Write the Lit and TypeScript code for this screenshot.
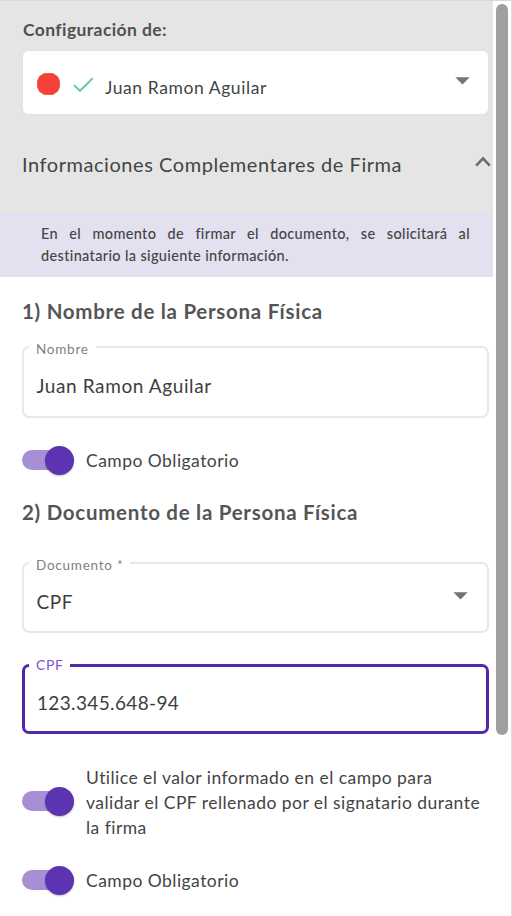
import { LitElement, html, css } from "lit";
import { customElement, property } from "lit/decorators.js";

const caret = html`<svg class="caret" width="15" height="8" viewBox="0 0 15 8">
  <path d="M0.3 0.3H14.7L7.5 7.6Z" fill="#757575" />
</svg>`;

@customElement("outlined-field")
class OutlinedField extends LitElement {
  @property() label = "";
  @property() value = "";
  @property({ type: Boolean }) select = false;
  @property({ type: Boolean, reflect: true }) focused = false;

  static styles = css`
    :host {
      display: block;
      box-sizing: border-box;
      position: relative;
      height: 72px;
      border: 2px solid #e8e8e8;
      border-radius: 7px;
    }
    :host([focused]) {
      border: 3px solid #5428ae;
      height: 70px;
    }
    .label {
      position: absolute;
      top: -8px;
      left: 5px;
      padding: 0 7px;
      background: #fff;
      color: #808080;
      font-size: 13.5px;
      line-height: 18px;
      letter-spacing: 0.75px;
      white-space: nowrap;
    }
    :host([focused]) .label {
      top: -11px;
      left: 4px;
      color: #7d55c7;
      font-size: 14px;
      letter-spacing: 0.6px;
    }
    .body {
      display: flex;
      align-items: center;
      justify-content: space-between;
      height: 100%;
      box-sizing: border-box;
      padding: 7px 19px 0 12.5px;
      font-size: 19px;
      letter-spacing: 0.6px;
      color: #3e3e3e;
    }
    :host([focused]) .body {
      padding-left: 12px;
      letter-spacing: 0.35px;
    }
    .caret {
      margin-bottom: 10px;
    }
  `;

  render() {
    return html`<span class="label">${this.label}</span>
      <div class="body"><span>${this.value}</span>${this.select ? caret : ""}</div>`;
  }
}

@customElement("toggle-row")
class ToggleRow extends LitElement {
  @property() label = "";

  static styles = css`
    :host {
      display: flex;
      align-items: center;
      gap: 12px;
      min-height: 30px;
    }
    .switch {
      flex: none;
      display: flex;
      align-items: center;
      justify-content: flex-end;
      width: 52px;
      height: 20px;
      border-radius: 10px;
      background: #a78fd5;
    }
    :host([multiline]) .switch {
      margin-bottom: 3px;
    }
    .thumb {
      width: 29px;
      height: 29px;
      border-radius: 50%;
      background: #5c33b0;
      box-shadow: 0 1px 2px rgba(0, 0, 0, 0.25);
    }
    .text {
      font-size: 17.5px;
      line-height: 25px;
      letter-spacing: 0.46px;
      color: #444;
      white-space: pre-line;
    }
  `;

  render() {
    return html`<span class="switch"><span class="thumb"></span></span>
      <span class="text">${this.label}</span>`;
  }
}

@customElement("app-root")
class AppRoot extends LitElement {
  static styles = css`
    :host {
      display: flex;
      box-sizing: border-box;
      width: 512px;
      height: 916px;
      overflow: hidden;
      background: #fff;
      border-top: 1px solid #d9d9d9;
      border-right: 1px solid #dedede;
      font-family: Lato, "Liberation Sans", sans-serif;
      color: #444;
    }
    .panel {
      width: 493px;
      flex: none;
    }
    .head {
      box-sizing: border-box;
      height: 211px;
      padding: 17px 0 0 23px;
      background: #e5e5e5;
    }
    .caption {
      font-size: 17.5px;
      font-weight: 700;
      line-height: 24px;
      letter-spacing: 0.4px;
      color: #505050;
    }
    .signer {
      display: flex;
      align-items: center;
      box-sizing: border-box;
      width: 465px;
      height: 63px;
      margin-top: 9px;
      padding: 4px 18px 0 14px;
      border-radius: 5px;
      background: #fff;
      box-shadow: 0 0 1px rgba(0, 0, 0, 0.12);
    }
    .dot {
      margin: 0 13px 1px 0;
    }
    .check {
      margin-right: 11px;
    }
    .name {
      flex: 1;
      padding-top: 5px;
      font-size: 17.5px;
      letter-spacing: 0.58px;
    }
    .caret {
      margin-bottom: 7px;
    }
    .section {
      display: flex;
      align-items: center;
      justify-content: space-between;
      height: 40px;
      margin-top: 30px;
      padding-right: 2px;
      font-size: 20px;
      letter-spacing: 0.55px;
    }
    .section span {
      margin-left: -1px;
    }
    .chevron {
      margin-bottom: 6px;
    }
    .notice {
      box-sizing: border-box;
      height: 65px;
      padding: 11px 23px 0 41px;
      background: #e3e0ef;
      font-size: 14.5px;
      line-height: 22px;
      letter-spacing: 0.35px;
      font-weight: 500;
      text-align: justify;
    }
    .form {
      display: flex;
      flex-direction: column;
      width: 467px;
      padding: 19px 0 0 22px;
    }
    .title {
      font-size: 20.5px;
      font-weight: 700;
      line-height: 30px;
      letter-spacing: 0.72px;
      color: #555;
    }
    .f1 {
      margin-top: 20px;
    }
    .t1 {
      margin: 27px 0 22px;
    }
    .f2 {
      height: 71px;
      margin-top: 35px;
    }
    .f3 {
      margin: 31px 0 31px;
    }
    .t3 {
      margin-top: 25px;
    }
    .rail {
      flex: none;
      padding: 3px 0 0 3px;
    }
    .bar {
      width: 12px;
      height: 731px;
      border-radius: 6px;
      background: #9f9f9f;
    }
  `;

  render() {
    return html`
      <div class="panel">
        <div class="head">
          <div class="caption">Configuración de:</div>
          <div class="signer">
            <svg class="dot" width="23" height="22" viewBox="0 0 23 22">
              <path d="M7 0.6H16L20.5 3.6L22.5 8V14L20.5 18.4L16 21.4H7L2.5 18.4L0.5 14V8L2.5 3.6Z" fill="#f44336" stroke="#f44336" stroke-width="0.8" stroke-linejoin="round" />
            </svg>
            <svg class="check" width="21" height="16" viewBox="0 0 21 16">
              <path d="M1 8.2L7 13.8L19.8 1.2" fill="none" stroke="#66cf9c" stroke-width="2" />
            </svg>
            <span class="name">Juan Ramon Aguilar</span>
            ${caret}
          </div>
          <div class="section">
            <span>Informaciones Complementares de Firma</span>
            <svg class="chevron" width="16" height="11" viewBox="0 0 16 11">
              <path d="M1.2 9.6L8 2.4L14.8 9.6" fill="none" stroke="#6b6b6b" stroke-width="2.6" />
            </svg>
          </div>
        </div>
        <div class="notice">En el momento de firmar el documento, se solicitará al destinatario la siguiente información.</div>
        <div class="form">
          <div class="title">1) Nombre de la Persona Física</div>
          <outlined-field class="f1" label="Nombre" value="Juan Ramon Aguilar"></outlined-field>
          <toggle-row class="t1" label="Campo Obligatorio"></toggle-row>
          <div class="title">2) Documento de la Persona Física</div>
          <outlined-field class="f2" label="Documento *" value="CPF" select></outlined-field>
          <outlined-field class="f3" label="CPF" value="123.345.648-94" focused></outlined-field>
          <toggle-row
            multiline
            label=${"Utilice el valor informado en el campo para\nvalidar el CPF rellenado por el signatario durante\nla firma"}
          ></toggle-row>
          <toggle-row class="t3" label="Campo Obligatorio"></toggle-row>
        </div>
      </div>
      <div class="rail"><div class="bar"></div></div>
    `;
  }
}
